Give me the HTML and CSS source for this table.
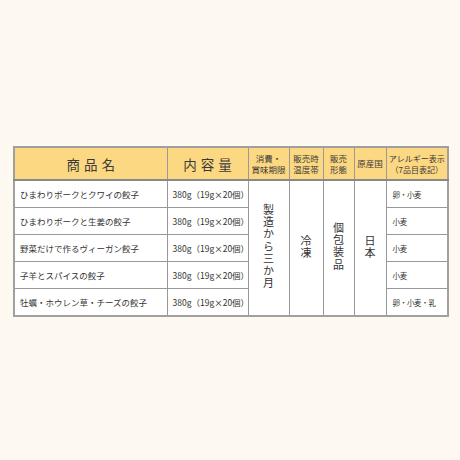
FILE: index.html
```html
<!DOCTYPE html>
<html lang="ja">
<head>
<meta charset="utf-8">
<link rel="stylesheet" href="styles.css">
</head>
<body>
<table class="spec">
  <colgroup>
    <col class="c1"><col class="c2"><col class="c3"><col class="c4"><col class="c5"><col class="c6"><col class="c7">
  </colgroup>
  <thead>
    <tr>
      <th class="big">商品名</th>
      <th class="big">内容量</th>
      <th class="small">消費・<br>賞味期限</th>
      <th class="small">販売時<br>温度帯</th>
      <th class="small">販売<br>形態</th>
      <th class="small">原産国</th>
      <th class="small tight">アレルギー表示<br>（7品目表記）</th>
    </tr>
  </thead>
  <tbody>
    <tr>
      <td>ひまわりポークとクワイの餃子</td>
      <td>380g（19g×20個）</td>
      <td rowspan="5" class="vert"><span>製造から三か月</span></td>
      <td rowspan="5" class="vert"><span>冷凍</span></td>
      <td rowspan="5" class="vert"><span>個包装品</span></td>
      <td rowspan="5" class="vert"><span>日本</span></td>
      <td class="al">卵・小麦</td>
    </tr>
    <tr>
      <td>ひまわりポークと生姜の餃子</td>
      <td>380g（19g×20個）</td>
      <td class="al">小麦</td>
    </tr>
    <tr>
      <td>野菜だけで作るヴィーガン餃子</td>
      <td>380g（19g×20個）</td>
      <td class="al">小麦</td>
    </tr>
    <tr>
      <td>子羊とスパイスの餃子</td>
      <td>380g（19g×20個）</td>
      <td class="al">小麦</td>
    </tr>
    <tr>
      <td>牡蠣・ホウレン草・チーズの餃子</td>
      <td>380g（19g×20個）</td>
      <td class="al">卵・小麦・乳</td>
    </tr>
  </tbody>
</table>
</body>
</html>
```

FILE: styles.css
```css
html, body {
  margin: 0;
  padding: 0;
  background: #fdf8f0;
}
body {
  padding: 146px 0 0 13px;
  font-family: "Noto Sans CJK JP", "Noto Sans", sans-serif;
  color: #333;
}
.spec {
  border-collapse: collapse;
  table-layout: fixed;
  width: 434px;
  background: #fff;
  border: 2px solid #a0a0a0;
}
.c1 { width: 153px; }
.c2 { width: 81px; }
.c3 { width: 41px; }
.c4 { width: 34px; }
.c5 { width: 31px; }
.c6 { width: 32px; }
.c7 { width: 62px; }
.spec th {
  background: #fdd883;
  border: 1px solid #999;
  border-bottom: 2px solid #888;
  height: 31px;
  padding: 0;
  font-weight: normal;
  color: #3a3a3a;
  text-align: center;
  vertical-align: middle;
  white-space: nowrap;
}
.spec th.big {
  font-size: 13.5px;
  letter-spacing: 4px;
  text-indent: 4px;
}
.spec th.small {
  font-size: 8.5px;
  line-height: 11px;
}
.spec th.tight {
  font-size: 8px;
}
.spec td {
  border: 1px solid #999;
  height: 26px;
  padding: 0 0 0 5px;
  font-size: 8.5px;
  line-height: 11px;
  vertical-align: middle;
  white-space: nowrap;
}
.spec td.al {
  padding-left: 6px;
  font-size: 7.5px;
  letter-spacing: -0.3px;
}
.spec td.vert {
  padding: 0;
  text-align: center;
}
.vert span {
  display: inline-block;
  writing-mode: vertical-rl;
  text-orientation: upright;
  font-size: 11px;
  line-height: 12px;
  letter-spacing: 1.3px;
}
```
